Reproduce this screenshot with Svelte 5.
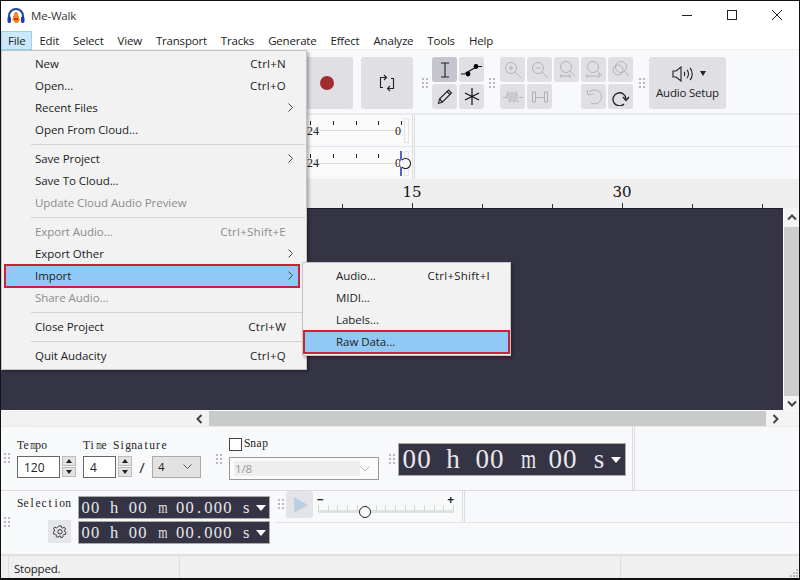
<script>
  const menus = ['File','Edit','Select','View','Transport','Tracks','Generate','Effect','Analyze','Tools','Help'];
  const fileMenu = [
    [{t:'New',k:'Ctrl+N'},{t:'Open...',k:'Ctrl+O'},{t:'Recent Files',sub:1},{t:'Open From Cloud...'}],
    [{t:'Save Project',sub:1},{t:'Save To Cloud...'},{t:'Update Cloud Audio Preview',off:1}],
    [{t:'Export Audio...',k:'Ctrl+Shift+E',off:1},{t:'Export Other',sub:1},{t:'Import',sub:1,hot:1},{t:'Share Audio...',off:1}],
    [{t:'Close Project',k:'Ctrl+W'}],
    [{t:'Quit Audacity',k:'Ctrl+Q'}]
  ];
  const importMenu = [{t:'Audio...',k:'Ctrl+Shift+I'},{t:'MIDI...'},{t:'Labels...'},{t:'Raw Data...',hot:1}];
  const rulerTicks = [0,1,2,3,4,5,6,7,8,9,10];
  const sliderTicks = Array.from({length:15},(_,i)=>i);
</script>

{#snippet mono(text)}<span class="mono" aria-label={text}>{#each [...text] as ch}<span class="c" class:w={ch==='m'}>{ch}</span>{/each}</span>{/snippet}

<div class="win">
  <header class="title">
    <svg class="logo" viewBox="0 0 18 16" width="18" height="16">
      <path d="M2 11V8a7 7 0 0 1 14 0v3" fill="none" stroke="#1f3fa8" stroke-width="2"/>
      <rect x="0.5" y="8.5" width="3.5" height="6.5" rx="1.4" fill="#1f3fa8"/>
      <rect x="14" y="8.5" width="3.5" height="6.5" rx="1.4" fill="#1f3fa8"/>
      <path d="M5 11h1V8h1V5h1v-1h2v1h1v3h1v3h1v1.500h-1V14h-1v1H8v-1H7v-1.500H5z" fill="#f08a1e"/>
      <path d="M7 10h4v2H7z" fill="#d8281e"/>
    </svg>
    <span class="doc">Me-Walk</span>
    <div class="winbtns">
      <svg width="10" height="10" viewBox="0 0 10 10"><path d="M0 5.500h10" stroke="#222" fill="none"/></svg>
      <svg width="10" height="10" viewBox="0 0 10 10"><rect x=".5" y=".5" width="9" height="9" stroke="#222" fill="none"/></svg>
      <svg width="10" height="10" viewBox="0 0 10 10"><path d="M0 0l10 10M10 0L0 10" stroke="#222" fill="none"/></svg>
    </div>
  </header>

  <nav class="menubar">
    {#each menus as m, i}<span class="mi" class:open={i===0}>{m}</span>{/each}
  </nav>

  <section class="tools">
    <i class="grip g1"></i>
    <div class="transport">
      <div class="tb big"></div><div class="tb big"></div><div class="tb big"></div>
      <div class="tb big"></div><div class="tb big"></div>
      <div class="tb big"><span class="rec"></span></div>
    </div>
    <div class="tb big loop">
      <svg width="16" height="18" viewBox="0 0 16 18" fill="none" stroke="#222" stroke-width="1.100">
        <path d="M7 3.500H1.500v10H4M9 14.500h5.500v-10H12"/><path d="M5 1l2.500 2.500L5 6M11 12l-2.500 2.500L11 17"/>
      </svg>
    </div>
    <i class="grip g2"></i>
    <div class="grid2 edit">
      <div class="sq on"><svg width="12" height="16" viewBox="0 0 12 16" fill="none" stroke="#222" stroke-width="1.100"><path d="M2 1h8M2 15h8M6 1v14"/></svg></div>
      <div class="sq"><svg width="21" height="14" viewBox="0 0 21 14"><path d="M4 10.500L17 3" stroke="#111" stroke-width="1.200"/><circle cx="7" cy="11" r="2.400"/><circle cx="15" cy="3.500" r="2.400"/><path d="M0 11h4M17 3.500h4" stroke="#111"/></svg></div>
      <div class="sq"><svg width="16" height="17" viewBox="0 0 16 17" fill="none" stroke="#222" stroke-width="1.100"><path d="M1.500 15.500l1-4.500L11.500 2l3 3-9 9z"/><path d="M10 3.500l3 3M2.500 11l3 3"/></svg></div>
      <div class="sq"><svg width="16" height="17" viewBox="0 0 16 17" fill="none" stroke="#111" stroke-width="1.200"><path d="M8 0v17M1 5l14 7M15 5L1 12"/></svg></div>
    </div>
    <i class="grip g3"></i>
    <div class="grid5 edit">
      <div class="sq"><svg class="dim" width="20" height="20" viewBox="0 0 20 20"><circle cx="8" cy="8" r="5.500"/><path d="M12 12l6 6M5.500 8h5M8 5.500v5"/></svg></div>
      <div class="sq"><svg class="dim" width="20" height="20" viewBox="0 0 20 20"><circle cx="8" cy="8" r="5.500"/><path d="M12 12l6 6M5.500 8h5"/></svg></div>
      <div class="sq"><svg class="dim" width="20" height="20" viewBox="0 0 20 20"><circle cx="9" cy="7" r="5.500"/><path d="M13 11l5 5M3 16h11M5 14l-2 2 2 2M12 14l2 2-2 2"/></svg></div>
      <div class="sq"><svg class="dim" width="20" height="20" viewBox="0 0 20 20"><circle cx="9" cy="7" r="5.500"/><path d="M13 11l5 5M3 16h12M3 14v4M15 14v4"/></svg></div>
      <div class="sq"><svg class="dim" width="20" height="20" viewBox="0 0 20 20"><circle cx="10" cy="7" r="5.500"/><circle cx="7" cy="10" r="5"/><path d="M13 11l5 5"/></svg></div>
      <div class="sq"><svg class="dim" width="20" height="14" viewBox="0 0 20 14"><path d="M0 7.500h4M16 7.500h4M4 7.500V3a1 1 0 0 1 2 0v8a1 1 0 0 0 2 0V3a1 1 0 0 1 2 0v8a1 1 0 0 0 2 0V3a1 1 0 0 1 2 0v8a1 1 0 0 0 2 0"/></svg></div>
      <div class="sq"><svg class="dim" width="18" height="14" viewBox="0 0 18 14"><path d="M1.500 2v10h3V2zM4.500 7.500h9M13.500 2v10h3V2z"/></svg></div>
      <div class="blank"></div>
      <div class="sq"><svg class="dim" width="18" height="18" viewBox="0 0 18 18"><path d="M4 4.500A7 7 0 1 1 6 15"/><path d="M2 2l1 5 5-1"/></svg></div>
      <div class="sq"><svg width="18" height="18" viewBox="0 0 18 18" fill="none" stroke="#222" stroke-width="1.300"><path d="M14 11a6.500 6.500 0 1 0-2 5"/><path d="M11 9l3 3.500 3-3.500"/></svg></div>
    </div>
    <i class="grip g4"></i>
    <div class="tb setup">
      <div class="sp">
        <svg width="22" height="16" viewBox="0 0 22 16" fill="none" stroke="#222" stroke-width="1.100"><path d="M1 5h3l5-4v14l-5-4H1z"/><path d="M12 6c1 1 1 3 0 4M15 4c2 2 2 6 0 8M18 2c3 3 3 9 0 12"/></svg>
        <b class="tri"></b>
      </div>
      <span>Audio Setup</span>
    </div>
  </section>

  <section class="meters">
    <div class="mrow">
      <div class="meter"><div class="scale"><span>24</span><span>0</span></div><div class="box"></div></div>
      <div class="rest"></div>
    </div>
    <div class="mrow">
      <div class="meter"><div class="scale"><span>24</span><span>0</span><em class="peak"></em><em class="cur"></em></div><div class="box"></div></div>
      <div class="rest"></div>
    </div>
  </section>

  <section class="ruler">
    {#each rulerTicks as t, i}
      <i class="tick" class:maj={i%3===2} style="left:{271 + i*70}px"></i>
    {/each}
    <span class="num n15">15</span><span class="num n30">30</span>
  </section>

  <section class="tracks">
    <div class="trackarea"></div>
    <div class="vbar">
      <svg class="chev" width="10" height="8" viewBox="0 0 10 8"><path d="M1 6.500l4-4 4 4" fill="none" stroke="#444" stroke-width="2"/></svg>
      <div class="vthumb"></div>
      <svg class="chev" width="10" height="8" viewBox="0 0 10 8"><path d="M1 1.500l4 4 4-4" fill="none" stroke="#444" stroke-width="2"/></svg>
    </div>
  </section>
  <section class="hbar">
    <svg width="8" height="10" viewBox="0 0 8 10"><path d="M6.500 1l-4 4 4 4" fill="none" stroke="#444" stroke-width="2"/></svg>
    <div class="hthumb"></div>
    <svg width="8" height="10" viewBox="0 0 8 10"><path d="M1.500 1l4 4-4 4" fill="none" stroke="#444" stroke-width="2"/></svg>
  </section>

  <section class="row1">
    <i class="grip g5"></i>
    <div class="field tempo">
      <label class="lab" for="tempo">{@render mono('Tempo')}</label>
      <div class="spin"><input id="tempo" value="120" readonly /><div class="arrows"><b class="up"></b><b class="dn"></b></div></div>
    </div>
    <div class="field sig">
      <label class="lab" for="sig">{@render mono('Time Signature')}</label>
      <div class="spin">
        <input id="sig" class="short" value="4" readonly /><div class="arrows"><b class="up"></b><b class="dn"></b></div>
        <span class="slash">/</span>
        <div class="sel"><span>4</span><svg width="9" height="6" viewBox="0 0 9 6"><path d="M.5 .5l4 4 4-4" fill="none" stroke="#555"/></svg></div>
      </div>
    </div>
    <i class="grip g6"></i>
    <div class="snap">
      <div class="chk"><span class="box2"></span><span class="lab snaplab">{@render mono('Snap')}</span></div>
      <div class="snapsel"><span>1/8</span><svg width="10" height="6" viewBox="0 0 10 6"><path d="M.5 .5l4.500 4.500 4.500-4.500" fill="none" stroke="#bbb"/></svg></div>
    </div>
    <i class="grip g7"></i>
    <div class="time big-t">{@render mono('00 h 00 m 00 s')}<b class="wtri"></b></div>
    <div class="sep"></div>
  </section>

  <section class="row2">
    <i class="grip g8"></i>
    <div class="selwrap">
      <div class="sellab"><span class="lab sl">{@render mono('Selection')}</span>
        <div class="gear"><svg width="14" height="14" viewBox="0 0 14 14" fill="none" stroke="#333"><path d="M5.800 1h2.400l.4 1.700 1.300.6L11.500 2.400 13 4.300l-1.200 1.300.2 1.400 1.500.9-.7 2.300-1.800-.1-1 1 .1 1.800-2.300.7L7 11.800H6l-.9 1.500-2.200-.8.100-1.800-1-1-1.800.1-.7-2.200L1 6.700l.2-1.300L0 4l1.500-1.800 1.600.9 1.300-.6z" transform="translate(.5 0) scale(.93)"/><circle cx="7" cy="6.800" r="2.200"/></svg></div>
      </div>
      <div class="sels">
        <div class="time small-t">{@render mono('00 h 00 m 00.000 s')}<b class="wtri"></b></div>
        <div class="time small-t">{@render mono('00 h 00 m 00.000 s')}<b class="wtri"></b></div>
      </div>
    </div>
    <div class="playcol">
      <div class="playrow">
        <i class="grip g9"></i>
        <div class="playbtn"><b></b></div>
        <div class="slider">
          <span class="mn">−</span><span class="pl">+</span>
          <div class="strack">{#each sliderTicks as s}<i></i>{/each}</div>
          <em class="knob"></em>
        </div>
        <div class="sep2"></div>
      </div>
    </div>
  </section>

  <footer class="status">
    <span class="s0"></span><span class="s1">Stopped.</span><span class="s2"></span><span class="s3"></span>
    <svg class="resize" width="9" height="9" viewBox="0 0 9 9" fill="#bbb"><path d="M7 1h2v2H7zM4 4h2v2H4zM7 4h2v2H7zM1 7h2v2H1zM4 7h2v2H4zM7 7h2v2H7z"/></svg>
  </footer>

  <div class="popup file">
    {#each fileMenu as group, g}
      {#if g>0}<div class="msep"></div>{/if}
      {#each group as it}
        <div class="item" class:off={it.off} class:hot={it.hot}>
          <span>{it.t}</span>
          {#if it.k}<span class="key">{it.k}</span>{/if}
          {#if it.sub}<svg class="more" width="5" height="9" viewBox="0 0 5 9"><path d="M.5 .5l4 4-4 4" fill="none" stroke="#444"/></svg>{/if}
        </div>
      {/each}
    {/each}
  </div>

  <div class="popup imp">
    {#each importMenu as it}
      <div class="item" class:hot={it.hot}>
        <span>{it.t}</span>
        {#if it.k}<span class="key">{it.k}</span>{/if}
      </div>
    {/each}
  </div>
</div>

<style>
  :global(body){margin:0;background:#fff}
  .win{position:relative;width:800px;height:580px;box-sizing:border-box;border:1px solid #111;border-bottom-width:2px;background:#f8f9fb;font:11.500px/16px "Open Sans","Noto Sans",sans-serif;letter-spacing:-.2px;color:#222;overflow:hidden;display:flex;flex-direction:column}
  .title{height:30px;flex:none;background:#fff;display:flex;align-items:center;padding-left:6px}
  .logo{margin-right:6px}
  .doc{color:#333}
  .winbtns{margin-left:auto;display:flex;gap:35px;margin-right:17px;margin-top:-2px}
  .menubar{height:19px;flex:none;background:#fff;display:flex;box-sizing:border-box;border-bottom:1px solid #f0f0f2}
  .mi{padding:0 7px;height:19px;line-height:19px;box-sizing:border-box}
  .mi.open{background:#cce8fb;box-shadow:inset 0 0 0 1px #99d1f7}

  .tools{height:65px;flex:none;display:flex;align-items:center;border-bottom:2px solid #eaebed;box-sizing:border-box;position:relative;padding:3px 0 0 30px}
  .transport{display:flex;gap:2px}
  .tb{background:#dfdfe4;border-radius:3px;display:flex;align-items:center;justify-content:center}
  .big{width:52px;height:52px}
  .rec{width:14px;height:14px;border-radius:50%;background:#a32c2f}
  .loop{margin-left:8px}
  .grip{display:block;width:7px;height:12px;flex:none;background:radial-gradient(circle,#b9b9bd 1.200px,transparent 1.400px) 0 0/4px 4px}
  .g1{margin:0;position:absolute;left:20px}
  .g2{margin:0 4px 0 8px}
  .g3{margin:0 5px 0 4px}
  .g4{margin:0 4px 0 5px}
  .grid2{display:grid;grid-template-columns:25px 25px;grid-auto-rows:25px;gap:2px}
  .grid5{display:grid;grid-template-columns:repeat(5,25px);grid-auto-rows:25px;gap:2px}
  .sq{background:#dfdfe4;border-radius:3px;display:flex;align-items:center;justify-content:center}
  .sq.on{background:#c4c5cf}
  .dim{fill:none;stroke:#b4b4b8;stroke-width:1}
  .setup{width:77px;height:52px;flex-direction:column;gap:3px}
  .sp{display:flex;align-items:center;gap:6px;padding-left:3px}
  .tri{width:0;height:0;border:3px solid transparent;border-top:5px solid #222;border-bottom:0}

  .meters{flex:none;display:flex;flex-direction:column}
  .mrow{height:32px;display:flex;border-bottom:1px solid #e6e7ea;box-sizing:border-box}
  .mrow:last-child{height:32px;border-bottom:0}
  .meter{width:414px;display:flex;justify-content:flex-end;align-items:center;padding-right:3px;box-sizing:border-box;border-right:3px double #dcdcdf}
  .scale{position:relative;width:95px;height:25px;background:#fbfbfc;display:flex;justify-content:space-between;align-items:center;font:12px/12px "Liberation Serif",serif;letter-spacing:0;color:#222;box-sizing:border-box;background-image:linear-gradient(#dcdcdc,#dcdcdc),repeating-linear-gradient(90deg,#222 0 1px,transparent 1px 22.800px);background-size:100% 1px,100% 4px;background-position:0 12px,3px 3px;background-repeat:no-repeat;padding-right:1px}
  .box{width:5px;height:25px;margin-left:2px;border:1px solid #e4e4e6;box-sizing:border-box}
  .peak{position:absolute;left:93px;top:0;width:2px;height:25px;background:#5a62c8}
  .cur{position:absolute;left:93px;top:7px;width:9px;height:9px;border:1.500px solid #111;border-radius:50%;background:#f7f7f7;border-left-color:#f7f7f7}
  .rest{flex:1}

  .ruler{height:29px;flex:none;background:#eeeeef;position:relative}
  .tick{position:absolute;bottom:0;width:1px;height:4px;background:#333}
  .tick.maj{height:5px}
  .num{position:absolute;font:15px/16px "DejaVu Serif",serif;letter-spacing:0;transform:translateX(-50%);top:5px;color:#111}
  .n15{left:411px}.n30{left:621px}

  .tracks{height:202px;flex:none;display:flex;background:#fff}
  .trackarea{flex:1;background:#353445;border-top:1px solid #1c1c26}
  .vbar{width:15px;margin-left:1px;background:#f3f3f4;display:flex;flex-direction:column;align-items:center;justify-content:space-between;padding-top:5px;box-sizing:border-box}
  .vbar .vthumb{width:100%;flex:1;background:#cdcdce;margin:4px 0}
  .chev{flex:none;margin-bottom:2px}
  .hbar{height:15px;flex:none;margin-top:1px;display:flex;align-items:center;padding-left:194px;box-sizing:border-box;background:linear-gradient(90deg,#f1f1f2,#f4f4f5)}
  .hbar svg{flex:none}
  .hthumb{flex:none;width:557px;height:15px;background:#c9caca;margin:0 6px}

  .mono{display:inline-block;white-space:nowrap}
  .c{display:inline-block;width:var(--p);text-align:center;white-space:pre}
  .c.w{transform:scaleX(var(--wx,.72))}
  .lab{font:11.500px/14px "Liberation Serif",serif;letter-spacing:0;color:#222;--p:6px;--wx:.62}

  .row1{height:65px;flex:none;display:flex;border-top:1px solid #e9e9ec;border-bottom:1px solid #dcdcdf;box-sizing:border-box;position:relative}
  .g5{margin:25px 7px 0 2px}
  .field{display:flex;flex-direction:column;margin-top:11px}
  .tempo{width:66px}
  .spin{display:flex;align-items:flex-start;margin-top:4px}
  input{width:43px;height:22px;box-sizing:border-box;border:1px solid #666;background:#fff;font:12px "Open Sans",sans-serif;padding:0 0 0 6px;color:#222;outline:none}
  input.short{width:33px}
  .arrows{margin-left:2px;width:14px;display:flex;flex-direction:column;gap:1px}
  .arrows b{height:10px;background:#e3e3e6;border:1px solid #bbb;box-sizing:border-box;position:relative}
  .arrows b::after{content:"";position:absolute;left:3px;top:2px;border:3px solid transparent}
  .up::after{border-bottom:4px solid #222!important;border-top:0!important}
  .dn::after{border-top:4px solid #222!important;border-bottom:0!important}
  .slash{width:20px;text-align:center;font-size:15px;line-height:22px}
  .sel{width:49px;height:22px;background:#e2e2e3;border:1px solid #aaa;box-sizing:border-box;display:flex;align-items:center;justify-content:space-between;padding:0 8px 0 5px}
  .g6{margin:26px 7px 0 14px}
  .snap{width:150px;margin-top:10px}
  .chk{display:flex;align-items:center;gap:2px;height:14px}
  .snaplab{margin-top:-2px}
  .box2{width:13px;height:13px;background:#fff;border:1px solid #444;box-sizing:border-box;flex:none}
  .snapsel{margin-top:6px;height:23px;box-sizing:border-box;border:1px solid #999;background:#fbfbfb;display:flex;align-items:center;justify-content:space-between;padding:3px 8px 3px 4px;color:#999}
  .snapsel span{background:#eeeeef;width:125px;padding-left:1px;line-height:15px}
  .g7{margin:26px 3px 0 9px}
  .time{position:relative;background:#353445;color:#e8e8ec;border:1px solid #aaa;box-shadow:inset 0 0 0 1px #353445;font-family:"Liberation Serif",serif;letter-spacing:0;white-space:nowrap;box-sizing:border-box}
  .big-t{width:228px;height:33px;margin-top:16px;font-size:27px;line-height:31px;padding-left:3px;--p:14.600px}
  .wtri{position:absolute;right:4px;top:50%;margin-top:-3px;border:5px solid transparent;border-top:6px solid #fff;border-bottom:0}
  .sep{position:absolute;left:631px;top:0;bottom:0;border-left:1px solid #dcdcdf;border-right:1px solid #dcdcdf;width:1px}

  .row2{height:65px;flex:none;display:flex;position:relative;border-bottom:2px solid #e0e0e3;box-sizing:border-box}
  .g8{margin:25px 7px 0 2px}
  .selwrap{display:flex;margin-top:5px}
  .sellab{width:61px;display:flex;flex-direction:column;align-items:flex-end}
  .sl{align-self:flex-start;white-space:nowrap}
  .gear{width:23px;height:23px;background:#e5e6e9;display:flex;align-items:center;justify-content:center;margin-top:10px;margin-right:7px}
  .sels{display:flex;flex-direction:column;gap:2px}
  .small-t{width:192px;height:23px;font-size:16.500px;line-height:21px;padding-left:2px;--p:9.450px}
  .small-t .wtri{right:3px}
  .playcol{flex:1}
  .playrow{display:flex;align-items:center;height:32px;border-bottom:1px solid #e3e3e6;box-sizing:border-box;position:relative;margin-left:5px}
  .g9{margin:-6px 2px 0 2px}
  .playbtn{width:27px;height:27px;background:#e3e4e9;border-radius:3px;display:flex;align-items:center;justify-content:center;margin-top:-4px}
  .playbtn b{border:8px solid transparent;border-left:14px solid #bdcfdc;border-right:0;margin-left:2px}
  .slider{position:relative;width:138px;height:28px;margin-left:4px}
  .mn{position:absolute;left:0;top:0;font-size:12px;font-weight:700;line-height:14px}
  .pl{position:absolute;right:1px;top:0;font-size:12px;font-weight:700;line-height:14px}
  .strack{position:absolute;left:1px;right:1px;top:17px;height:3px;background:#dfe3e0;display:flex;justify-content:space-between}
  .strack i{display:block;width:1px;height:6px;margin-top:-5px;background:#d4d6d4}
  .knob{position:absolute;left:42px;top:13px;width:12px;height:12px;border:1.500px solid #222;border-radius:50%;background:#fafafa;box-sizing:border-box}
  .sep2{position:absolute;left:187px;top:0;bottom:0;width:1px;border-left:1px solid #dcdcdf;border-right:1px solid #dcdcdf}

  .status{height:22px;flex:none;background:#f0f0f0;display:flex;line-height:25px;position:relative}
  .status span{display:block;box-sizing:border-box;border-right:1px solid #dedee0}
  .s0{width:8px}
  .s1{width:171px;padding-left:5px}
  .s2{width:441px}
  .s3{flex:1;border-right:0!important}
  .resize{position:absolute;right:1px;bottom:1px}

  .popup{position:absolute;background:#f2f2f2;border:1px solid #c4c4c4;box-shadow:2px 2px 3px rgba(0,0,0,.3);box-sizing:border-box;padding:2px}
  .file{left:0;top:49px;width:306px}
  .imp{left:301px;top:261px;width:209px;padding:2px 1px}
  .item{height:22px;line-height:22px;display:flex;justify-content:space-between;position:relative;box-sizing:border-box;letter-spacing:-.05px}
  .key{letter-spacing:.25px}
  .file .item{padding:0 13px 0 30px;margin:0 5px 0 1px}
  .imp .item{padding:0 19px 0 32px}
  .off{color:#8c8c8c}
  .more{position:absolute;right:6px;top:6px}
  .hot{background:#90c8f6;outline:2px solid #c8243a;outline-offset:-1px;color:#222}
  .msep{height:7px;position:relative}
  .msep::after{content:"";position:absolute;left:27px;right:-1px;top:3px;height:1px;background:#d2d2d2}
</style>
